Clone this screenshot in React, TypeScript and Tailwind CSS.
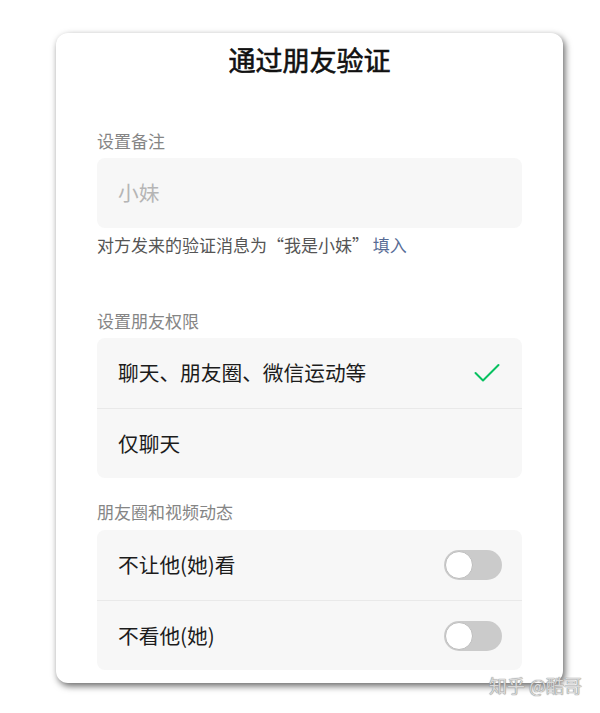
import React from "react";

const font = { fontFamily: '"Noto Sans CJK SC", "Noto Sans", sans-serif' };

function Toggle() {
  return (
    <div className="w-[58px] h-[30px] rounded-full bg-[#cbcbcb] flex items-center p-[1px]">
      <div className="w-[28px] h-[28px] rounded-full bg-white border border-[#bdbdbd]" />
    </div>
  );
}

function Check() {
  return (
    <svg width="26" height="20" viewBox="0 0 26 20" fill="none">
      <path d="M1.5 10 L9 17.5 L24.5 2" stroke="#07c160" strokeWidth="2" strokeLinecap="round" strokeLinejoin="round" />
    </svg>
  );
}

export default function App() {
  return (
    <div className="relative w-[600px] h-[713px] bg-white overflow-hidden" style={font}>
      <div className="pt-[33px] pl-[56px]">
        <div className="w-[507px] h-[650px] bg-white rounded-[12px] shadow-[2px_3px_7px_rgba(0,0,0,0.6)] px-[41px] pt-[9px] flex flex-col">
          <div className="text-center text-[27px] leading-[36px] font-normal text-[#111] [-webkit-text-stroke:0.6px_#111]">通过朋友验证</div>

          <div className="mt-[51px] text-[17px] leading-[24px] text-[#858585]">设置备注</div>
          <div className="mt-[5px] h-[70px] rounded-[8px] bg-[#f7f7f7] flex items-center pl-[21px] text-[20.7px] text-[#b5b5b5]">
            小妹
          </div>
          <div className="mt-[5px] text-[17px] leading-[24px] text-[#555]">
            对方发来的验证消息为“我是小妹” <span className="text-[#576b95]">填入</span>
          </div>

          <div className="mt-[52px] text-[17px] leading-[24px] text-[#858585]">设置朋友权限</div>
          <div className="mt-[5px] rounded-[8px] bg-[#f7f7f7] flex flex-col">
            <div className="h-[70px] flex items-center justify-between pl-[21px] pr-[22px] text-[20.7px] text-[#1c1c1c]">
              <span>聊天、朋友圈、微信运动等</span>
              <Check />
            </div>
            <div className="h-px bg-[#e9e9e9]" />
            <div className="h-[69px] flex items-center pl-[21px] text-[20.7px] text-[#1c1c1c]">仅聊天</div>
          </div>

          <div className="mt-[22px] text-[17px] leading-[24px] text-[#858585]">朋友圈和视频动态</div>
          <div className="mt-[6px] rounded-[8px] bg-[#f7f7f7] flex flex-col">
            <div className="h-[70px] flex items-center justify-between pl-[21px] pr-[20px] text-[20.7px] text-[#1c1c1c]">
              <span>不让他(她)看</span>
              <Toggle />
            </div>
            <div className="h-px bg-[#e9e9e9]" />
            <div className="h-[69px] flex items-center justify-between pl-[21px] pr-[20px] text-[20.7px] text-[#1c1c1c]">
              <span>不看他(她)</span>
              <Toggle />
            </div>
          </div>
        </div>
      </div>
      <div
        className="absolute left-[489px] top-[673px] text-[18px] leading-[24px] text-[#d9d9d9]"
        style={{ textShadow: "0 0 1px #8a8a8a, 0 0 1px #8a8a8a" }}
      >
        知乎 @酷哥
      </div>
    </div>
  );
}
